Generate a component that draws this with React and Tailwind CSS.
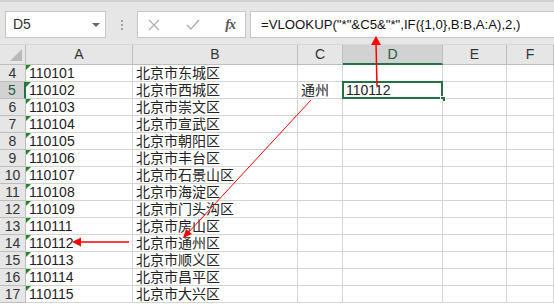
import React from 'react';

const rows = [
  [4, '110101', '北京市东城区'],
  [5, '110102', '北京市西城区'],
  [6, '110103', '北京市崇文区'],
  [7, '110104', '北京市宣武区'],
  [8, '110105', '北京市朝阳区'],
  [9, '110106', '北京市丰台区'],
  [10, '110107', '北京市石景山区'],
  [11, '110108', '北京市海淀区'],
  [12, '110109', '北京市门头沟区'],
  [13, '110111', '北京市房山区'],
  [14, '110112', '北京市通州区'],
  [15, '110113', '北京市顺义区'],
  [16, '110114', '北京市昌平区'],
  [17, '110115', '北京市大兴区'],
];

const cols = ['A', 'B', 'C', 'D', 'E', 'F'];
const formula = '=VLOOKUP("*"&C5&"*",IF({1,0},B:B,A:A),2,)';
const cell = 'h-[17px] border-r border-b border-[#d4d4d4] bg-white leading-[17px] overflow-visible whitespace-nowrap';

const Arrows = () => (
  <svg className="absolute left-0 top-0 pointer-events-none" width="554" height="305">
    <line x1="377" y1="86" x2="376" y2="43" stroke="#ff0000" strokeWidth="1.5" />
    <polygon points="376,36 371,45 381,45" fill="#ff0000" />
    <line x1="311" y1="100" x2="188" y2="233" stroke="#ff0000" strokeWidth="1" />
    <polygon points="183,238 192,234 186,229" fill="#ff0000" />
    <line x1="129" y1="242" x2="80" y2="242" stroke="#ff0000" strokeWidth="1.5" />
    <polygon points="72,242 81,237.5 81,246.5" fill="#ff0000" />
  </svg>
);

export default function App() {
  return (
    <div className="relative w-[554px] h-[305px] overflow-hidden bg-white text-[#222]" style={{ fontFamily: '"Liberation Sans", "Noto Sans CJK SC", sans-serif' }}>
      {/* formula bar */}
      <div className="h-[45px] bg-[#e6e6e6] border-t-2 border-[#d0d0d0] flex items-start pt-[9px] pl-[5px] border-b border-b-[#d8d8d8]">
        <div className="w-[101px] h-[27px] bg-white border border-[#c6c6c6] flex items-center justify-between pl-[7px] pr-[5px]">
          <span className="text-[14px] text-[#333]">D5</span>
          <span className="w-0 h-0 border-l-[4px] border-r-[4px] border-t-[4px] border-l-transparent border-r-transparent border-t-[#666]" />
        </div>
        <div className="w-[31px] h-[27px] flex flex-col items-center justify-center gap-[2px]">
          <span className="w-[2px] h-[2px] bg-[#a0a0a0]" />
          <span className="w-[2px] h-[2px] bg-[#a0a0a0]" />
          <span className="w-[2px] h-[2px] bg-[#a0a0a0]" />
        </div>
        <div className="w-[109px] h-[27px] bg-white border border-[#c6c6c6] flex items-center px-[10px] justify-between">
          <svg width="12" height="12" viewBox="0 0 12 12"><path d="M1 1 L11 11 M11 1 L1 11" stroke="#b0b0b0" strokeWidth="1.3" /></svg>
          <svg width="14" height="12" viewBox="0 0 14 12"><path d="M1 6 L5 10 L13 1" stroke="#b0b0b0" strokeWidth="1.5" fill="none" /></svg>
          <span className="italic text-[14px] text-[#555] font-bold tracking-[-1px]" style={{ fontFamily: '"Liberation Serif", serif' }}>fx</span>
        </div>
        <div className="ml-[4px] flex-1 h-[27px] bg-white border border-r-0 border-[#c6c6c6] flex items-center pl-[10px] text-[13.2px] text-[#111] whitespace-nowrap">
          {formula}
        </div>
      </div>

      {/* sheet */}
      <div className="grid grid-cols-[26px_107px_165px_45px_100px_64px_1fr]">
        <div className="h-[20px] bg-[#e6e6e6] border-r border-b border-[#bdbdbd] relative">
          <svg className="absolute right-[3px] bottom-[3px]" width="12" height="12"><polygon points="12,0 12,12 0,12" fill="#b9b9b9" /></svg>
        </div>
        {cols.map(c => (
          <div
            key={c}
            className={`h-[20px] flex items-center justify-center text-[14px] border-r ${c === 'D' ? 'bg-[#d2d2d2] border-b-2 border-b-[#217346] text-[#1d5c3a]' : 'bg-[#e6e6e6] border-b border-b-[#bdbdbd] text-[#333]'} border-r-[#bdbdbd]`}
          >
            {c}
          </div>
        ))}
        {rows.map(([n, code, name]) => (
          <React.Fragment key={n}>
            <div className={`h-[17px] leading-[17px] text-center text-[14px] border-b border-[#bdbdbd] ${n === 5 ? 'bg-[#d2d2d2] border-r-2 border-r-[#217346] text-[#1d5c3a]' : 'bg-[#e6e6e6] border-r text-[#333]'}`}>
              {n}
            </div>
            <div className={`${cell} relative pl-[3px] text-[14px]`}>
              <span className="absolute left-0 top-0 w-0 h-0 border-t-[5px] border-r-[5px] border-t-[#1e8a1e] border-r-transparent" />
              {code}
            </div>
            <div className={`${cell} pl-[3px] text-[14px]`}>{name}</div>
            <div className={`${cell} pl-[3px] text-[14px]`}>{n === 5 ? '通州' : ''}</div>
            <div className={`${cell} relative pl-[3px] text-[14px]`}>
              {n === 5 && (
                <>
                  110112
                  <span className="absolute -left-px -top-px -right-px -bottom-px border-2 border-[#217346]" />
                  <span className="absolute -right-[4px] -bottom-[4px] w-[6px] h-[6px] bg-[#217346] border border-white" />
                </>
              )}
            </div>
            <div className={cell} />
            <div className={cell} />
          </React.Fragment>
        ))}
      </div>
      <Arrows />
    </div>
  );
}
